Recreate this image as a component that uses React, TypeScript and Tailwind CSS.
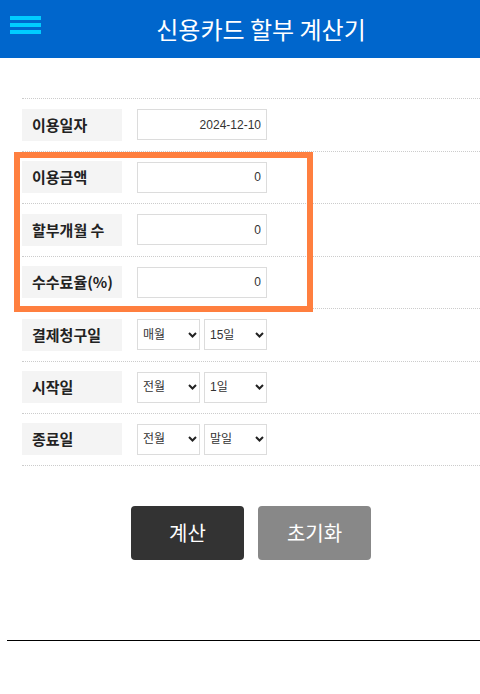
import React from 'react';

const FONT = '"Noto Sans CJK KR", "Noto Sans", sans-serif';
const NUM_FONT = '"Liberation Sans", "Noto Sans CJK KR", sans-serif';

function Chevron() {
  return (
    <svg
      className="pointer-events-none absolute right-[3px] top-1/2 -translate-y-1/2"
      width="9"
      height="6"
      viewBox="0 0 9 6"
      fill="none"
    >
      <path d="M1 1l3.5 3.5L8 1" stroke="#222" strokeWidth="2" />
    </svg>
  );
}

function Select({ value, options }: { value: string; options: string[] }) {
  return (
    <div className="relative h-[31px] w-[63px]">
      <select
        defaultValue={value}
        className="h-full w-full appearance-none border border-[#dcdcdc] bg-white pl-[5px] text-[12px] text-[#333] outline-none"
        style={{ fontFamily: NUM_FONT }}
      >
        {options.map(o => (
          <option key={o}>{o}</option>
        ))}
      </select>
      <Chevron />
    </div>
  );
}

function Row({ label, children, last }: { label: string; children: React.ReactNode; last?: boolean }) {
  return (
    <div
      className={
        'flex h-[52.5px] items-center border-t border-dotted border-[#cccccc]' +
        (last ? ' border-b' : '')
      }
    >
      <div className="flex h-[32px] w-[100px] items-center bg-[#f4f4f4] pl-[10px] text-[15px] font-bold text-[#222]">
        {label}
      </div>
      <div className="ml-[15px] flex gap-[4px]">{children}</div>
    </div>
  );
}

function NumInput({ value }: { value: string }) {
  return (
    <input
      readOnly
      value={value}
      className="h-[31px] w-[130px] border border-[#dcdcdc] bg-white pr-[5px] text-right text-[12px] text-[#333] outline-none"
      style={{ fontFamily: NUM_FONT }}
    />
  );
}

export default function App() {
  return (
    <div className="min-h-[694px] w-[480px] bg-white" style={{ fontFamily: FONT }}>
      {/* header */}
      <header className="relative flex h-[58px] items-center justify-center bg-[#0066cc]">
        <button className="absolute left-[10px] top-[16px] flex flex-col gap-[3px]">
          <span className="block h-[4px] w-[31px] bg-[#00ccff]" />
          <span className="block h-[4px] w-[31px] bg-[#00ccff]" />
          <span className="block h-[4px] w-[31px] bg-[#00ccff]" />
        </button>
        <h1 className="pl-[42px] text-[24px] font-normal text-white">신용카드 할부 계산기</h1>
      </header>

      <main className="pl-[22px] pt-[40px]">
        <div className="relative">
          <Row label="이용일자">
            <NumInput value="2024-12-10" />
          </Row>
          <Row label="이용금액">
            <NumInput value="0" />
          </Row>
          <Row label="할부개월 수">
            <NumInput value="0" />
          </Row>
          <Row label="수수료율(%)">
            <NumInput value="0" />
          </Row>
          <Row label="결제청구일">
            <Select value="매월" options={['매월']} />
            <Select value="15일" options={['1일', '15일', '말일']} />
          </Row>
          <Row label="시작일">
            <Select value="전월" options={['전월', '당월']} />
            <Select value="1일" options={['1일', '15일', '말일']} />
          </Row>
          <Row label="종료일" last>
            <Select value="전월" options={['전월', '당월']} />
            <Select value="말일" options={['1일', '15일', '말일']} />
          </Row>

          {/* highlight box */}
          <div className="pointer-events-none absolute left-[-8px] top-[54px] h-[160px] w-[299px] border-[6px] border-[#ff7f3f]" />
        </div>

        <div className="mt-[40px] flex justify-center gap-[14px]">
          <button className="h-[54px] w-[113px] rounded-[4px] bg-[#333333] text-[20px] text-white">계산</button>
          <button className="h-[54px] w-[113px] rounded-[4px] bg-[#888888] text-[20px] text-white">초기화</button>
        </div>
      </main>

      <div className="ml-[7px] mt-[80px] border-t border-black" />
    </div>
  );
}
